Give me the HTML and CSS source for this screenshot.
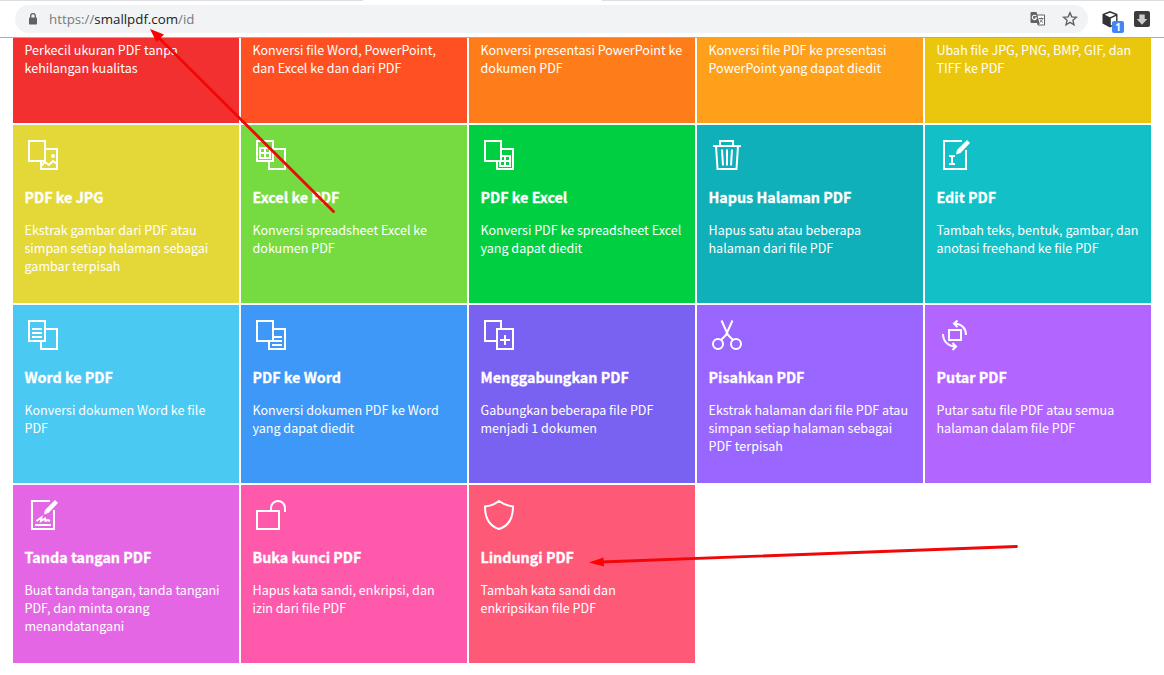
FILE: index.html
```html
<!DOCTYPE html>
<html lang="id">

<head>
    <meta charset="utf-8">
    <meta name="viewport" content="width=device-width, initial-scale=1">
    <title>Smallpdf</title>
    <link rel="stylesheet" href="styles.css">
</head>

<body>
    <header class="toolbar">
        <div class="address">
            <svg class="lock" width="10" height="12" viewBox="0 0 10 12">
                <rect x="1" y="4.5" width="8" height="7" rx="0.8" fill="#5f6368" />
                <path d="M2.7 5V3a2.3 2.3 0 0 1 4.6 0v2" fill="none" stroke="#5f6368" stroke-width="1.3" />
            </svg>
            <span class="url">https://<b>smallpdf.com</b>/id</span>
            <svg class="translate" width="16" height="16" viewBox="0 0 16 16">
                <path d="M6 4h8.5v10H8z" fill="#fff" stroke="#5f6368" />
                <path d="M1.5 1h5l3 11h-8a1 1 0 0 1-1-1V2a1 1 0 0 1 1-1z" fill="#5f6368" />
                <path d="M6.2 5A2.2 2.2 0 1 0 6.6 7H4.6" fill="none" stroke="#fff" stroke-width="1.1" />
                <path d="M9 7.5h4.5M11.2 6.5v1M12.5 7.5c-.3 2-1.5 3-2.5 3.8M10 8.5c.8 1.5 1.8 2.3 3 3" fill="none" stroke="#5f6368" stroke-width=".9" />
                <path d="M8 12v2.500l2-2.500z" fill="#5f6368" />
            </svg>
            <svg class="star" width="16" height="16" viewBox="0 0 16 16">
                <path d="M8 1.700l1.800 4.200 4.600.4-3.500 3 1.100 4.500L8 11.400l-4 2.400 1.100-4.500-3.500-3 4.600-.4z" fill="none" stroke="#5f6368" stroke-width="1.400" />
            </svg>
        </div>
        <div class="extension">
            <svg width="16" height="17" viewBox="0 0 16 17">
                <path d="M8 0l7.500 3v9.500L8 16.500.500 12.500V3z" fill="#333" />
                <path d="M8 1.700l5.300 2L8 6.200l-5.300-2.500z" fill="#fff" />
                <path d="M8.800 7.600l5.300-2.500v6.800l-5.300 2.700z" fill="#fff" />
            </svg>
            <span class="badge">1</span>
        </div>
        <svg class="download" width="16" height="16" viewBox="0 0 16 16">
            <rect width="16" height="16" rx="2" fill="#3c3c3c" />
            <path d="M5.300 3.500h5.400v4.500h2.600L8 13.700 2.700 8h2.600z" fill="#ccc" />
        </svg>
    </header>

    <main class="tools">
        <a class="tool cut red">
            <p>Perkecil ukuran PDF tanpa<br>kehilangan kualitas</p>
        </a>
        <a class="tool cut vermilion">
            <p>Konversi file Word, PowerPoint,<br>dan Excel ke dan dari PDF</p>
        </a>
        <a class="tool cut orange">
            <p>Konversi presentasi PowerPoint ke<br>dokumen PDF</p>
        </a>
        <a class="tool cut amber">
            <p>Konversi file PDF ke presentasi<br>PowerPoint yang dapat diedit</p>
        </a>
        <a class="tool cut gold">
            <p>Ubah file JPG, PNG, BMP, GIF, dan<br>TIFF ke PDF</p>
        </a>

        <a class="tool yellow">
            <svg class="icon" viewBox="0 0 30 30">
                <path d="M1 1h16v20H1zM18 9h11v20H13v-7" />
                <path d="M13 26l4-4 4 3 4-4 4 3" />
                <circle class="solid" cx="25" cy="16" r="2" />
            </svg>
            <h2>PDF ke JPG</h2>
            <p>Ekstrak gambar dari PDF atau<br>simpan setiap halaman sebagai<br>gambar terpisah</p>
        </a>
        <a class="tool lime">
            <svg class="icon" viewBox="0 0 30 30">
                <path d="M1 1h16v20H1zM18 9h11v20H13v-7" />
                <path d="M4 8h10v10H4zM9 8v10M4 13h10" />
            </svg>
            <h2>Excel ke PDF</h2>
            <p>Konversi spreadsheet Excel ke<br>dokumen PDF</p>
        </a>
        <a class="tool green">
            <svg class="icon" viewBox="0 0 30 30">
                <path d="M1 1h16v20H1zM18 9h11v20H13v-7" />
                <path d="M18 16h8v10H16v-4M21 16v10M16 21h10" />
            </svg>
            <h2>PDF ke Excel</h2>
            <p>Konversi PDF ke spreadsheet Excel<br>yang dapat diedit</p>
        </a>
        <a class="tool teal">
            <svg class="icon" viewBox="0 0 30 30">
                <path d="M1 6h28M8 6V1h13v5M4 6l1.500 23h19L26 6" />
                <path d="M10 9.500l1 16M15 9.500v16M20 9.500l-1 16" />
            </svg>
            <h2>Hapus Halaman PDF</h2>
            <p>Hapus satu atau beberapa<br>halaman dari file PDF</p>
        </a>
        <a class="tool cyan">
            <svg class="icon" viewBox="0 0 30 30">
                <path d="M22 1H4v28h22V10" />
                <path d="M9 16h6M12 16v8M9 24h6" />
                <path class="solid" d="M27 0l3 3-9.500 10-4.500 1.500 1-4.500z" />
            </svg>
            <h2>Edit PDF</h2>
            <p>Tambah teks, bentuk, gambar, dan<br>anotasi freehand ke file PDF</p>
        </a>

        <a class="tool sky">
            <svg class="icon" viewBox="0 0 30 30">
                <path d="M1 1h16v20H1zM18 9h11v20H13v-7" />
                <path d="M4 9h10M4 13h10M4 17h10" />
            </svg>
            <h2>Word ke PDF</h2>
            <p>Konversi dokumen Word ke file<br>PDF</p>
        </a>
        <a class="tool blue">
            <svg class="icon" viewBox="0 0 30 30">
                <path d="M1 1h16v20H1zM18 9h11v20H13v-7" />
                <path d="M18 17h8M18 21h8M16 25h10" />
            </svg>
            <h2>PDF ke Word</h2>
            <p>Konversi dokumen PDF ke Word<br>yang dapat diedit</p>
        </a>
        <a class="tool indigo">
            <svg class="icon" viewBox="0 0 30 30">
                <path d="M12 21H1V1h16v7M13 9h16v20H13z" />
                <path d="M16 20h10M21 15v10" />
            </svg>
            <h2>Menggabungkan PDF</h2>
            <p>Gabungkan beberapa file PDF<br>menjadi 1 dokumen</p>
        </a>
        <a class="tool violet">
            <svg class="icon" viewBox="0 0 30 30">
                <circle cx="6" cy="24" r="5" />
                <circle cx="24" cy="24" r="5" />
                <path d="M9.500 0.500L16 15l5 5M20.500 0.500L14 15l-5 5" />
            </svg>
            <h2>Pisahkan PDF</h2>
            <p>Ekstrak halaman dari file PDF atau<br>simpan setiap halaman sebagai<br>PDF terpisah</p>
        </a>
        <a class="tool purple">
            <svg class="icon" viewBox="0 0 30 30">
                <path d="M9 10h12v10H9zM17.500.500L14 3.500 17.500 7M14 3.500c7.500 0 12 5 12 11.500M12.500 23l3.500 3.500-3.500 3.500M16 26.500C8 26.500 3 21 3 14" />
            </svg>
            <h2>Putar PDF</h2>
            <p>Putar satu file PDF atau semua<br>halaman dalam file PDF</p>
        </a>

        <a class="tool orchid">
            <svg class="icon" viewBox="0 0 30 30">
                <path d="M22 1H4v28h22V10" />
                <path d="M7 25h16" />
                <path d="M8.500 21l5-3.500-.5 3.500 4-2.500.5 2.500 2.500-1 2 1" />
                <path class="solid" d="M27 0l3 3-9.500 10-4.500 1.500 1-4.500z" />
            </svg>
            <h2>Tanda tangan PDF</h2>
            <p>Buat tanda tangan, tanda tangani<br>PDF, dan minta orang<br>menandatangani</p>
        </a>
        <a class="tool pink">
            <svg class="icon" viewBox="0 0 30 30">
                <path d="M1 11h22v18H1zM15 11V8a7 7 0 0 1 14 0v4" />
            </svg>
            <h2>Buka kunci PDF</h2>
            <p>Hapus kata sandi, enkripsi, dan<br>izin dari file PDF</p>
        </a>
        <a class="tool coral">
            <svg class="icon" viewBox="0 0 30 30">
                <path d="M15 1c4 3 8.500 5 14 5.500C29 17 25 26 15 29 5 26 1 17 1 6.500 6.500 6 11 4 15 1z" />
            </svg>
            <h2>Lindungi PDF</h2>
            <p>Tambah kata sandi dan<br>enkripsikan file PDF</p>
        </a>
    </main>

    <svg class="arrows" width="1164" height="675" viewBox="0 0 1164 675">
        <path d="M333.500 211.500L159 38M1016.500 546.500L601 562" />
        <path class="head" d="M150 29l14 5.500-7.500 7.500zM589 562.500l14.500-5 .5 9z" />
    </svg>
</body>

</html>
```

FILE: styles.css
```css
* {
    box-sizing: border-box;
}

body {
    margin: 0;
    height: 675px;
    overflow: hidden;
    background: #fff;
    font-family: "Noto Sans CJK SC", sans-serif;
}

/* browser bar, the active tab opens the top line */
.toolbar {
    display: flex;
    align-items: center;
    height: 38px;
    padding: 1px 0 0 15px;
    border-bottom: 1px solid #a9abad;
    background: linear-gradient(to right, #dcdee1 363px, #fff 363px, #fff 602px, #dcdee1 602px) 0 0 / 100% 1px no-repeat;
}

.address {
    display: flex;
    align-items: center;
    width: 1073px;
    height: 28px;
    padding: 0 10px 0 13px;
    border-radius: 14px;
    background: #f1f3f4;
}

.url {
    flex: 1;
    margin-left: 11px;
    font: 13.3px "Open Sans", sans-serif;
    color: #777b80;
}

.url b {
    font-weight: normal;
    color: #202124;
}

.star {
    margin-left: 16px;
}

.extension {
    position: relative;
    width: 16px;
    height: 17px;
    margin-left: 14px;
}

.extension svg,
.download {
    display: block;
}

.badge {
    position: absolute;
    left: 10px;
    top: 10px;
    width: 12px;
    height: 12px;
    border-radius: 2px;
    background: #4285f4;
    color: #fff;
    font: bold 10px/12px "Open Sans", sans-serif;
    text-align: center;
}

.download {
    margin-left: 16px;
}

/* tiles */
.tools {
    display: grid;
    grid-template-columns: repeat(5, 226px);
    grid-template-rows: 85px repeat(3, 178px);
    gap: 2px;
    padding-left: 13px;
}

.tool {
    padding: 15px 0 0 11.5px;
    color: #fff;
}

.tool.cut {
    padding-top: 3px;
}

.icon {
    display: block;
    width: 30px;
    height: 30px;
    margin-left: 3.5px;
    overflow: visible;
    fill: none;
    stroke: #fff;
    stroke-width: 2;
}

.icon .solid {
    fill: #fff;
    stroke: none;
}

h2 {
    margin: 16px 0 13px;
    font-size: 14.3px;
    line-height: 22px;
    font-weight: bold;
    -webkit-text-stroke: .3px #fff;
}

p {
    margin: 0;
    font-size: 12.55px;
    line-height: 18px;
    white-space: nowrap;
}

.red { background: #f33030; }
.vermilion { background: #ff5023; }
.orange { background: #ff7c1a; }
.amber { background: #ffa01a; }
.gold { background: #eac60d; }
.yellow { background: #e4d839; }
.lime { background: #75db40; }
.green { background: #00cf42; }
.teal { background: #10b0bb; }
.cyan { background: #11c1c7; }
.sky { background: #4ac9f3; }
.blue { background: #3e98f7; }
.indigo { background: #7961f2; }
.violet { background: #9966ff; }
.purple { background: #b266ff; }
.orchid { background: #e566e5; }
.pink { background: #ff59ac; }
.coral { background: #ff5978; }

/* red pointers over the page */
.arrows {
    position: absolute;
    left: 0;
    top: 0;
    fill: none;
    stroke: #f00808;
    stroke-width: 2.8;
    stroke-linecap: round;
}

.arrows .head {
    fill: #fe0000;
    stroke: none;
}
```
